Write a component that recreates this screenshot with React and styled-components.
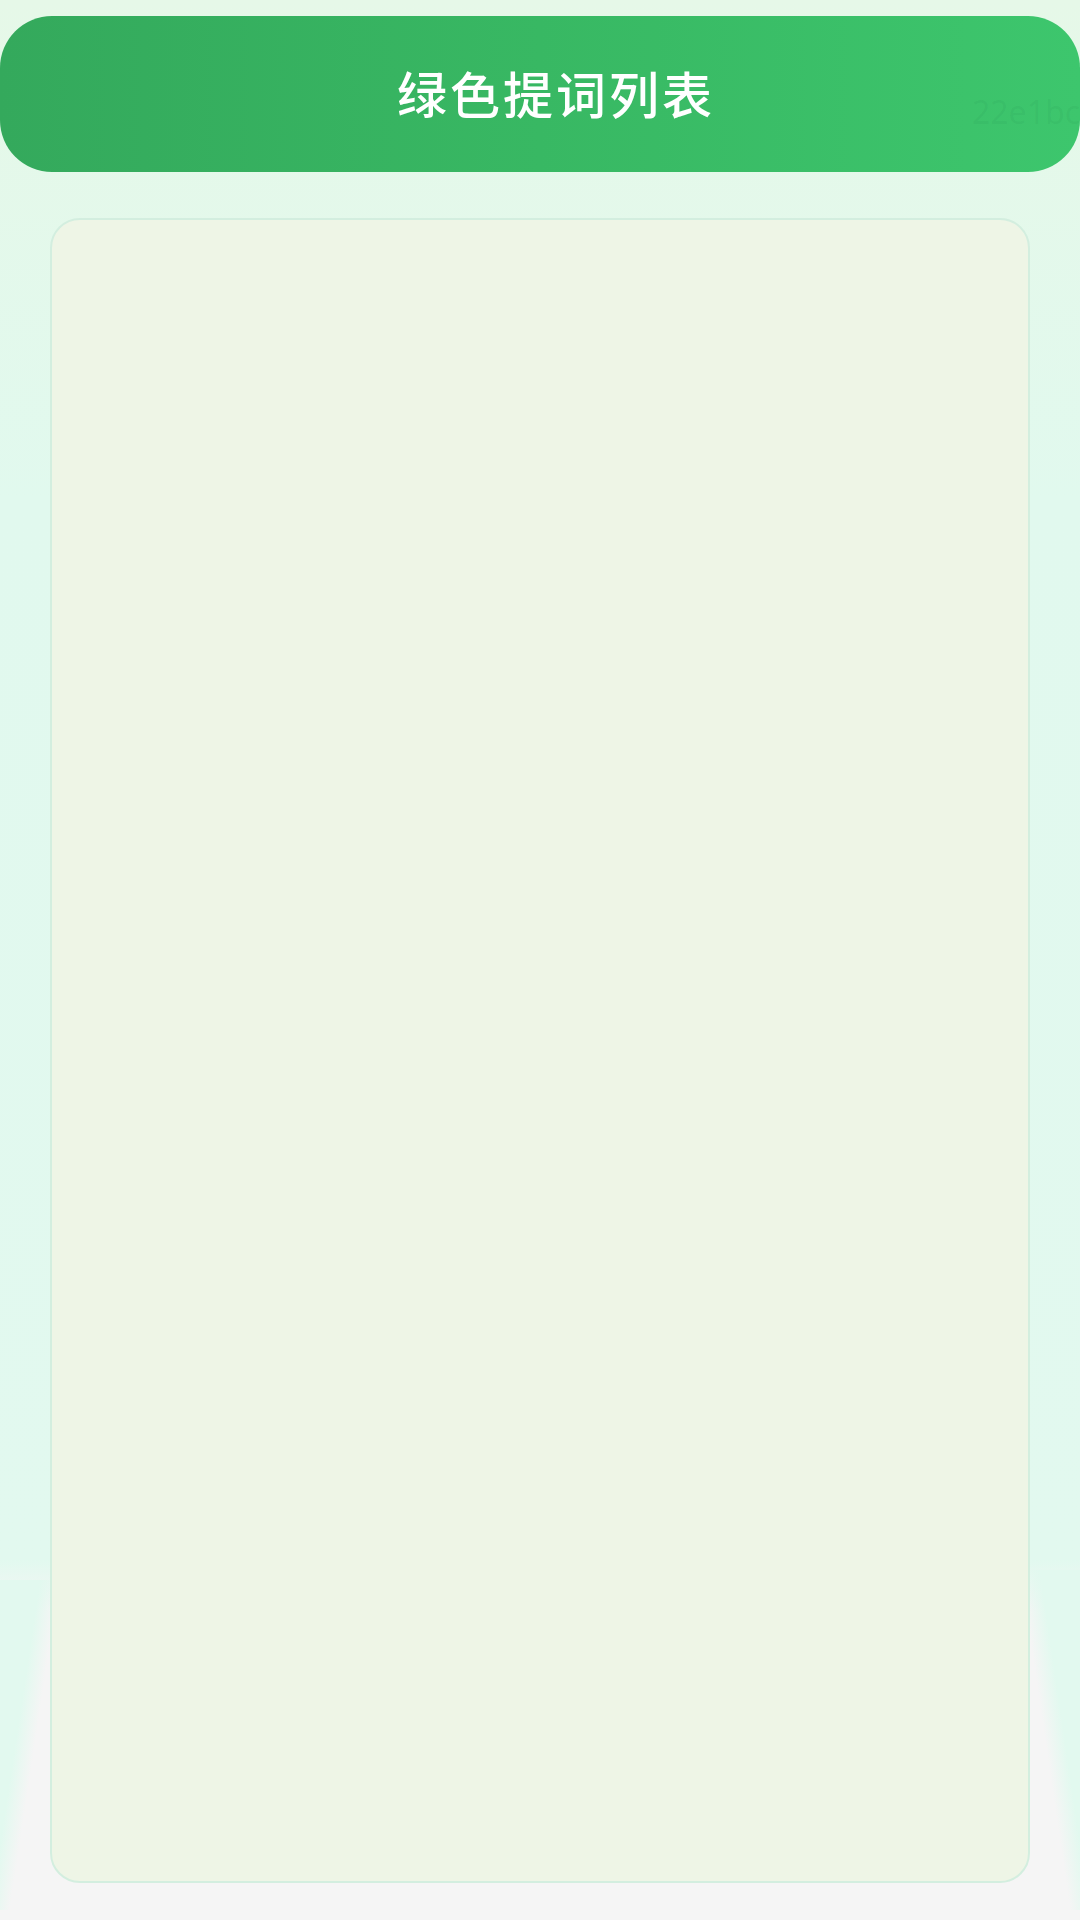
import React from "react";
import styled, { createGlobalStyle } from "styled-components";

const GlobalStyle = createGlobalStyle`
  html, body {
    margin: 0;
    padding: 0;
    background: #f5f5f5;
  }
  body {
    font-family: "Noto Sans CJK SC", "Noto Sans", sans-serif;
  }
`;

const App = () => {
  return (
    <Page>
      <GlobalStyle />
      <Header>
        <Title>绿色提词列表</Title>
        <BuildTag>22e1bc</BuildTag>
      </Header>
      <ListCard></ListCard>
    </Page>
  );
};

// mint wash fades to grey near the bottom, lingering a bit longer at the edges
const Page = styled.div`
  min-height: 1920px;
  box-sizing: border-box;
  padding-top: 16px;
  display: flex;
  flex-direction: column;
  background:
    linear-gradient(to bottom right, #e2f9ef 40%, rgba(226, 249, 239, 0) 60%)
      0 1580px / 50px 330px no-repeat,
    linear-gradient(to bottom left, #e2f9ef 40%, rgba(226, 249, 239, 0) 60%)
      1030px 1570px / 50px 340px no-repeat,
    linear-gradient(
      to bottom,
      #e6f8e8 0px,
      #e1f9ee 500px,
      #e2f9ef 1560px,
      #f5f5f5 1610px
    );
`;

const Header = styled.header`
  position: relative;
  height: 156px;
  border-radius: 52px;
  overflow: hidden;
  display: flex;
  align-items: center;
  justify-content: center;
  background: linear-gradient(90deg, #34a95c 0%, #38b863 50%, #3dc66d 100%);
`;

const Title = styled.h1`
  margin: 0 0 4px 32px;
  font-family: "Noto Sans CJK SC", "Noto Sans CJK JP", sans-serif;
  font-size: 50px;
  font-weight: 500;
  letter-spacing: 3px;
  color: #ffffff;
  line-height: 1;
`;

const BuildTag = styled.span`
  position: absolute;
  left: 972px;
  top: 80px;
  font-family: "Noto Sans", sans-serif;
  font-size: 32px;
  line-height: 1;
  color: rgba(20, 110, 60, 0.08);
  white-space: nowrap;
`;

const ListCard = styled.main`
  margin: 46px 50px 0;
  height: 1665px;
  box-sizing: border-box;
  border: 2px solid #d3eedf;
  border-radius: 30px;
  background: #eef5e6;
`;

export default App;
